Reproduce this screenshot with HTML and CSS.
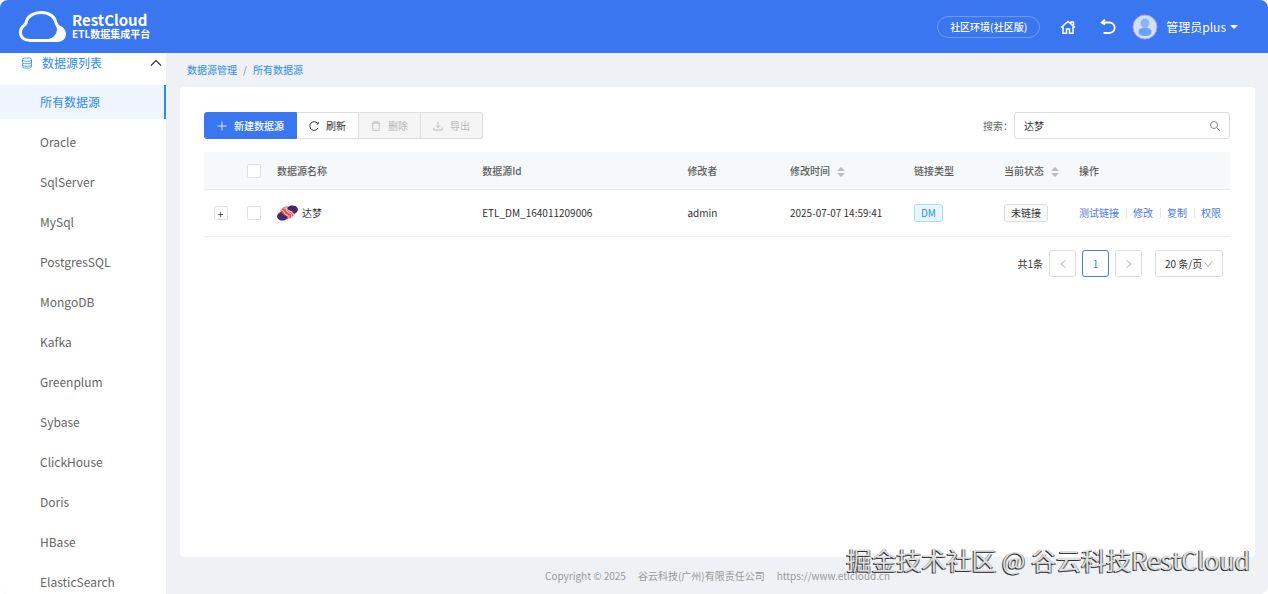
FILE: index.html
```html
<!DOCTYPE html>
<html lang="zh-CN">
<head>
	<meta charset="UTF-8"/>
	<meta name="viewport" content="width=device-width, initial-scale=1.0" />
	<title>RestCloud ETL数据集成平台</title>
	<link rel="stylesheet" href="styles.css">
</head>
<body>

<div class="app">

<header class="topbar">
	<a class="brand" href="#">
		<svg class="brand-logo" viewBox="0 0 48 32" width="48" height="32" fill="none">
			<path d="M39 14c5 1 8 5 8 9 0 5-4 8-9 8H25c7-2 13-7 14-17z" fill="#fff"/>
			<path d="M11 29.500C5 29.500 1.500 26 1.500 21.500c0-4 2-6 4-7.500 1.500-1 1.500-2 2-4C9 5 15 1.500 22 1.500c8 0 13.500 4 14.500 9 .500 3 3 4 3 8 0 6-5 11-13 11z" fill="#3a76f0" stroke="#fff" stroke-width="3"/>
		</svg>
		<span class="brand-text">
			<span class="brand-name">RestCloud</span>
			<span class="brand-sub">ETL数据集成平台</span>
		</span>
	</a>
	<nav class="topnav">
		<span class="env">社区环境(社区版)</span>
		<a class="topicon" href="#" aria-label="首页">
			<svg viewBox="0 0 16 16" width="16" height="16" fill="none" stroke="#fff" stroke-width="1.500">
				<path d="M1 8.500l7-6 7 6M3 7.500v6.700h3.500V10h3v4.200H13V7.500M11 4.500V3h2.500v3.500"/>
			</svg>
		</a>
		<a class="topicon back" href="#" aria-label="返回">
			<svg viewBox="0 0 16 16" width="16" height="16" fill="none" stroke="#fff" stroke-width="1.800">
				<path d="M1.500 3.500H9.500a5 5 0 0 1 0 10.500H3.500M5 .500L1.700 3.500 5 5.500"/>
			</svg>
		</a>
		<button class="user" type="button">
			<svg viewBox="0 0 26 26" width="26" height="26">
				<circle cx="13" cy="13" r="12" fill="#cfe1fd" stroke="#b79be8"/>
				<circle cx="13" cy="9" r="4.500" fill="#8db4f5"/>
				<path d="M6.500 18c0-3 3-4.500 6.500-4.500s6.500 1.500 6.500 4.500-3 4-6.500 4-6.500-1-6.500-4z" fill="#6ba3f7"/>
			</svg>
			<span>管理员plus</span>
			<span class="caret"></span>
		</button>
	</nav>
</header>

<div class="main">

<aside class="sidebar">
	<button class="group" type="button">
		<svg viewBox="0 0 12 12" width="12" height="12" fill="none" stroke="#2a8cf0" stroke-width=".8">
			<rect x="1.500" y="1" width="9" height="10" rx="2"/>
			<path d="M1.500 3.500c2 1 7 1 9 0M1.500 6c2 1 7 1 9 0M1.500 8.500c2 1 7 1 9 0"/>
		</svg>
		<span class="group-name">数据源列表</span>
		<svg viewBox="0 0 12 12" width="12" height="12" fill="none" stroke="#333" stroke-width="1.200">
			<path d="M1 8.500l5-5 5 5"/>
		</svg>
	</button>
	<nav class="menu">
		<a class="item active" href="#">所有数据源</a>
		<a class="item" href="#">Oracle</a>
		<a class="item" href="#">SqlServer</a>
		<a class="item" href="#">MySql</a>
		<a class="item" href="#">PostgresSQL</a>
		<a class="item" href="#">MongoDB</a>
		<a class="item" href="#">Kafka</a>
		<a class="item" href="#">Greenplum</a>
		<a class="item" href="#">Sybase</a>
		<a class="item" href="#">ClickHouse</a>
		<a class="item" href="#">Doris</a>
		<a class="item" href="#">HBase</a>
		<a class="item" href="#">ElasticSearch</a>
	</nav>
</aside>

<div class="content">
	<nav class="crumbs">
		<a href="#">数据源管理</a>
		<span>/</span>
		<a href="#">所有数据源</a>
	</nav>

	<main class="panel">
		<div class="toolbar">
			<div class="buttons">
				<button class="btn primary" type="button">
					<svg viewBox="0 0 10 10" width="10" height="10" fill="none" stroke="currentColor" stroke-width=".8"><path d="M5 .500v9M.500 5h9"/></svg>
					新建数据源
				</button>
				<button class="btn" type="button">
					<svg viewBox="0 0 10 10" width="10" height="10" fill="none" stroke="currentColor"><path d="M8.500 2.300A4.300 4.300 0 1 0 9 7M9.200 1v2H7.500"/></svg>
					刷新
				</button>
				<button class="btn" type="button" disabled>
					<svg viewBox="0 0 10 10" width="10" height="10" fill="none" stroke="currentColor" stroke-width=".9"><path d="M.800 2.200h8.400M3.200 2.200V.700h3.600v1.500M1.800 2.200v7.100h6.400V2.200"/></svg>
					删除
				</button>
				<button class="btn" type="button" disabled>
					<svg viewBox="0 0 10 10" width="10" height="10" fill="none" stroke="currentColor" stroke-width=".9"><path d="M5 .500v6M3 4.500l2 2 2-2M.800 6.500v2.500h8.400V6.500"/></svg>
					导出
				</button>
			</div>
			<div class="search">
				<label for="keyword">搜索：</label>
				<div class="searchbox">
					<input id="keyword" type="text" value="达梦">
					<svg viewBox="0 0 12 12" width="12" height="12" fill="none" stroke="#888"><circle cx="5" cy="5" r="3.500"/><path d="M7.500 7.500l3.500 3.500"/></svg>
				</div>
			</div>
		</div>

		<table class="grid">
			<colgroup>
				<col class="c-tick"><col class="c-tick"><col class="c-name"><col class="c-id"><col class="c-user"><col class="c-time"><col class="c-type"><col class="c-state"><col>
			</colgroup>
			<thead>
				<tr>
					<th></th>
					<th class="tick"><input type="checkbox" aria-label="全选"></th>
					<th>数据源名称</th>
					<th>数据源Id</th>
					<th>修改者</th>
					<th>修改时间<span class="sort"></span></th>
					<th>链接类型</th>
					<th>当前状态<span class="sort"></span></th>
					<th>操作</th>
				</tr>
			</thead>
			<tbody>
				<tr>
					<td class="tick"><button class="expand" type="button" aria-label="展开">+</button></td>
					<td class="tick"><input type="checkbox" aria-label="选择达梦"></td>
					<td>
						<span class="source">
							<svg viewBox="0 0 21 16" width="21" height="16">
								<ellipse cx="6" cy="11" rx="6" ry="4.500" fill="#43296f" transform="rotate(-12 6 11)"/>
								<ellipse cx="15" cy="5" rx="6" ry="4.500" fill="#43296f" transform="rotate(-12 15 5)"/>
								<path d="M3 6c1.500-2.500 4-4.500 7.500-5-.500 3 .500 4 3 4.500 2 .400 3 2 4 4-2 2.500-5 4.500-7.500 5 .500-3-.500-3.700-2.500-4.200C5.500 9.800 5 7 3 6z" fill="#e5534f"/>
								<path d="M4 5c4 0 2 4 6 5 2 .500 2 2 2 4M6.500 3c4 0 2 4 6 5 2 .500 2 2 2.500 4M9 1.700c1 4 2 4 5 5 1.500 .500 2 2 2.500 3.500" fill="none" stroke="#fbe0e0"/>
							</svg>
							达梦
						</span>
					</td>
					<td>ETL_DM_164011209006</td>
					<td>admin</td>
					<td>2025-07-07 14:59:41</td>
					<td><span class="tag blue">DM</span></td>
					<td><span class="tag">未链接</span></td>
					<td>
						<span class="actions">
							<a href="#">测试链接</a>
							<a href="#">修改</a>
							<a href="#">复制</a>
							<a href="#">权限</a>
						</span>
					</td>
				</tr>
			</tbody>
		</table>

		<div class="pager">
			<span>共1条</span>
			<button class="page" type="button" disabled aria-label="上一页">
				<svg viewBox="0 0 10 10" width="10" height="10" fill="none" stroke="currentColor"><path d="M7.500 1.500L2.500 5l5 3.500"/></svg>
			</button>
			<button class="page current" type="button">1</button>
			<button class="page" type="button" disabled aria-label="下一页">
				<svg viewBox="0 0 10 10" width="10" height="10" fill="none" stroke="currentColor"><path d="M2.500 1.500l5 3.500-5 3.500"/></svg>
			</button>
			<div class="size">
				<select aria-label="每页条数"><option>20 条/页</option></select>
				<svg viewBox="0 0 10 10" width="10" height="10" fill="none" stroke="#b5b5b5"><path d="M1 2.500l4 5 4-5"/></svg>
			</div>
		</div>
	</main>

	<footer class="footer">
		<span>Copyright © 2025</span>
		<span>谷云科技(广州)有限责任公司</span>
		<span>https://www.etlcloud.cn</span>
	</footer>
</div>

</div>

<div class="watermark">掘金技术社区 @ 谷云科技RestCloud</div>

</div>

</body>
</html>
```

FILE: styles.css
```css
	* {
		box-sizing: border-box;
	}
	body {
		margin: 0;
		background: #fff;
		color: #333;
		font-family: "Noto Sans CJK SC", sans-serif;
		font-size: 10px;
		line-height: 16px;
	}
	a {
		text-decoration: none;
	}
	button, input, select {
		margin: 0;
		font: inherit;
		color: inherit;
	}
	svg {
		display: block;
		flex: none;
	}
	.app {
		position: relative;
		display: flex;
		flex-direction: column;
		height: 100vh;
		overflow: hidden;
		border-radius: 8px;
		background: #eff1f4;
	}

	/* top bar */
	.topbar {
		display: flex;
		flex: none;
		align-items: center;
		justify-content: space-between;
		height: 53px;
		padding: 0 30px 0 19px;
		background: #3a76f0;
		color: #fff;
	}
	.brand {
		display: flex;
		align-items: center;
		gap: 5px;
		color: #fff;
		font-weight: 700;
	}
	.brand-text {
		display: flex;
		flex-direction: column;
	}
	.brand-name {
		font-size: 15px;
		line-height: 14px;
	}
	.brand-sub {
		font-size: 10px;
		line-height: 13px;
	}
	.topnav {
		display: flex;
		align-items: center;
	}
	.env {
		padding: 2px 12px;
		border: 1px solid #6f9bf5;
		border-radius: 12px;
		font-weight: 500;
	}
	.topicon {
		margin-left: 20px;
	}
	.back {
		margin-left: 24px;
	}
	.user {
		display: flex;
		align-items: center;
		margin-left: 16px;
		padding: 0;
		border: 0;
		background: none;
		font-size: 12px;
	}
	.user svg {
		margin-right: 8px;
	}
	.caret {
		margin-left: 4px;
		border: 4px solid transparent;
		border-top-color: #fff;
		border-bottom: 0;
	}

	/* sidebar */
	.main {
		display: flex;
		flex: 1;
		min-height: 0;
	}
	.sidebar {
		flex: none;
		width: 166px;
		overflow: hidden;
		background: #fff;
		font-size: 12px;
	}
	.group {
		display: flex;
		align-items: center;
		gap: 9px;
		width: 100%;
		height: 20px;
		padding: 0 4px 0 21px;
		border: 0;
		background: none;
		color: #2a8cf0;
	}
	.group-name {
		flex: 1;
		text-align: left;
	}
	.menu {
		display: flex;
		flex-direction: column;
		gap: 6px;
		padding-top: 12px;
	}
	.item {
		flex: none;
		height: 34px;
		padding-left: 40px;
		color: #666;
		line-height: 34px;
	}
	.active {
		border-right: 2px solid #2a8cf0;
		background: #f0f4ff;
		color: #2a8cf0;
	}

	/* content */
	.content {
		display: flex;
		flex: 1;
		flex-direction: column;
		min-width: 0;
		padding: 0 13px 0 14px;
	}
	.crumbs {
		display: flex;
		gap: 6px;
		padding: 9px 7px;
		color: #888;
	}
	.crumbs a {
		color: #2a8cf0;
	}
	.panel {
		flex: 1;
		padding: 25px 25px 0 24px;
		border-radius: 4px;
		background: #fff;
	}
	.toolbar {
		display: flex;
		justify-content: space-between;
		margin-bottom: 13px;
	}
	.buttons {
		display: flex;
	}
	.btn {
		display: flex;
		align-items: center;
		gap: 7px;
		height: 27px;
		padding: 0 12px;
		border: 1px solid #dedede;
		border-left-width: 0;
		background: #fff;
	}
	.btn:first-child {
		border-left-width: 1px;
		border-radius: 3px 0 0 3px;
	}
	.btn:last-child {
		border-radius: 0 3px 3px 0;
	}
	.primary {
		border-color: #3a76f0;
		background: #3a76f0;
		color: #fff;
		font-weight: 500;
	}
	.btn:disabled {
		background: #f5f5f5;
		color: #b8b8b8;
	}
	.search {
		display: flex;
		align-items: center;
		gap: 1px;
		color: #666;
	}
	.searchbox {
		display: flex;
		align-items: center;
		width: 216px;
		height: 27px;
		padding: 0 8px 0 9px;
		border: 1px solid #dedede;
		border-radius: 3px;
	}
	.searchbox input {
		flex: 1;
		min-width: 0;
		padding: 0;
		border: 0;
		outline: 0;
		background: none;
		color: #333;
	}

	/* table */
	.grid {
		width: 100%;
		border-collapse: separate;
		border-spacing: 0;
		table-layout: fixed;
	}
	.c-tick {
		width: 33px;
	}
	.c-name, .c-id {
		width: 20%;
	}
	.c-user {
		width: 10%;
	}
	.c-time {
		width: 124px;
	}
	.c-type {
		width: 90px;
	}
	.c-state {
		width: 75px;
	}
	th, td {
		padding: 0 0 0 7px;
		border-bottom: 1px solid #ebedf0;
		text-align: left;
		white-space: nowrap;
	}
	th {
		height: 38px;
		background: #f6f8fa;
		color: #5c5c5c;
		font-weight: 500;
	}
	td {
		height: 47px;
	}
	.tick {
		padding: 0;
	}
	.tick input, .expand {
		display: block;
		width: 14px;
		height: 14px;
		margin: 0 auto;
		border: 1px solid #e0e0e0;
		border-radius: 2px;
		background: #fff;
	}
	.tick input {
		appearance: none;
	}
	.expand {
		padding: 0;
		line-height: 11px;
	}
	.sort {
		display: inline-flex;
		flex-direction: column;
		gap: 2px;
		margin-left: 7px;
		vertical-align: middle;
	}
	.sort::before, .sort::after {
		content: "";
		border: 4px solid transparent;
	}
	.sort::before {
		border-top: 0;
		border-bottom-color: #bbb;
	}
	.sort::after {
		border-bottom: 0;
		border-top-color: #bbb;
	}
	.source {
		display: flex;
		align-items: center;
		gap: 4px;
	}
	.tag {
		display: inline-block;
		padding: 0 6px;
		border: 1px solid #dedede;
		border-radius: 3px;
		background: #fafafa;
	}
	.blue {
		border-color: #a9dcff;
		background: #e6f7ff;
		color: #2a8cf0;
	}
	.actions {
		display: flex;
	}
	.actions a {
		color: #4a7bea;
	}
	.actions a + a {
		margin-left: 7px;
		padding-left: 7px;
		background: linear-gradient(#e4e4e4, #e4e4e4) left center / 1px 10px no-repeat;
	}

	/* pagination */
	.pager {
		display: flex;
		align-items: center;
		justify-content: flex-end;
		gap: 6px;
		padding: 13px 7px 0 0;
	}
	.page {
		display: flex;
		align-items: center;
		justify-content: center;
		width: 27px;
		height: 27px;
		padding: 0;
		border: 1px solid #dedede;
		border-radius: 3px;
		background: #fff;
	}
	.page:disabled {
		color: #b5b5b5;
	}
	.current {
		border-color: #4a7bea;
		color: #4a7bea;
	}
	.size {
		display: flex;
		align-items: center;
		height: 27px;
		margin-left: 7px;
		padding: 0 9px;
		border: 1px solid #dedede;
		border-radius: 3px;
	}
	.size select {
		padding: 0;
		border: 0;
		background: none;
		appearance: none;
	}

	.footer {
		display: flex;
		flex: none;
		justify-content: center;
		gap: 12px;
		height: 37px;
		padding-top: 11px;
		color: #999;
	}
	.watermark {
		position: absolute;
		right: 18px;
		bottom: 17px;
		color: #dedede;
		font-size: 25px;
		line-height: 36px;
		text-shadow: -1px 1px 0 #333, 1px 1px 0 #777;
		pointer-events: none;
	}
```
